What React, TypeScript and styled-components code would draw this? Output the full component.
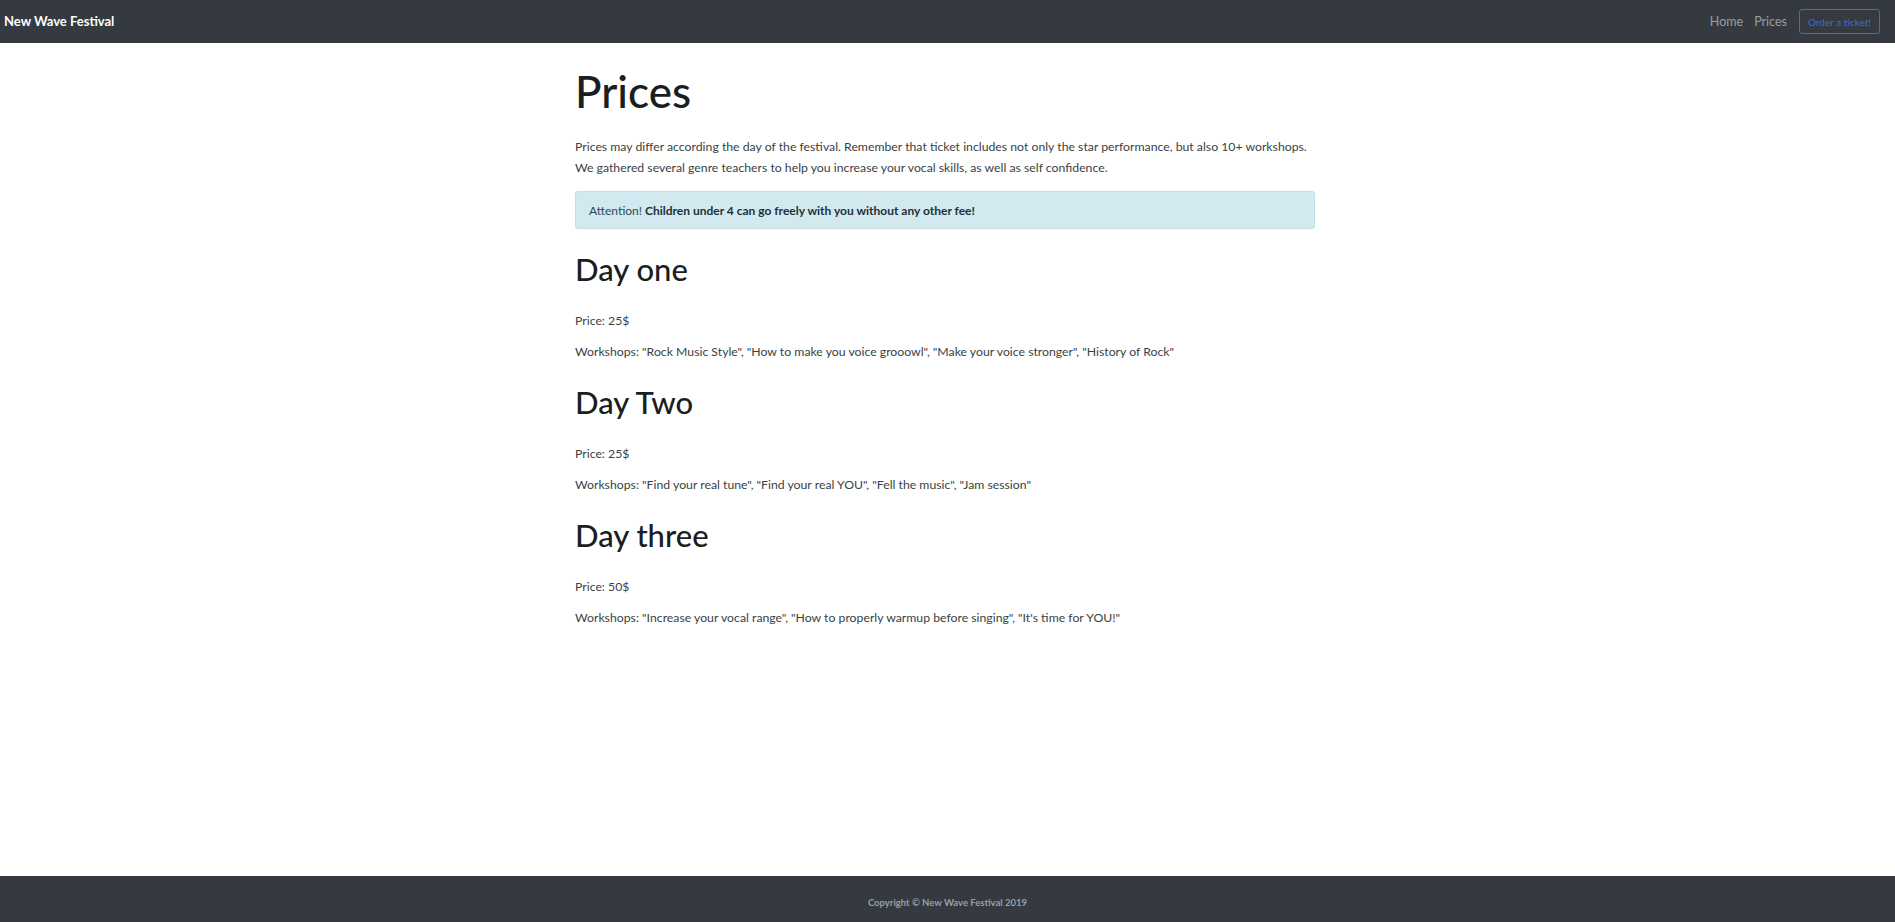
import styled, { createGlobalStyle } from "styled-components";

const GlobalStyle = createGlobalStyle`
  html, body {
    margin: 0;
    padding: 0;
  }
  body {
    font-family: Lato, "Noto Sans", sans-serif;
    color: #212529;
    background: #fff;
  }
  #root {
    min-height: 100vh;
    display: flex;
    flex-direction: column;
  }
`;

const days = [
    {
        title: "Day one",
        price: "25$",
        workshops: '"Rock Music Style", "How to make you voice grooowl", "Make your voice stronger", "History of Rock"',
    },
    {
        title: "Day Two",
        price: "25$",
        workshops: '"Find your real tune", "Find your real YOU", "Fell the music", "Jam session"',
    },
    {
        title: "Day three",
        price: "50$",
        workshops: '"Increase your vocal range", "How to properly warmup before singing", "It\'s time for YOU!"',
    },
];

const NavBar = styled.nav`
  height: 43px;
  background: #343a40;
  display: flex;
  align-items: center;
  justify-content: space-between;
  padding: 0 15px 0 4px;
  box-sizing: border-box;
`;

const Brand = styled.a`
  color: #fff;
  font-size: 13px;
  font-weight: 700;
  text-decoration: none;
  margin-top: -1px;
`;

const NavLinks = styled.div`
  display: flex;
  align-items: center;
  gap: 11px;
`;

const NavLink = styled.a`
  color: rgba(255, 255, 255, 0.5);
  font-size: 12.5px;
  text-decoration: none;
`;

const OrderButton = styled.button`
  margin-left: 1px;
  height: 25px;
  width: 81px;
  padding: 0;
  background: transparent;
  border: 1px solid #2f6fe8;
  border-radius: 3px;
  color: #2f6fe8;
  font-family: Lato, sans-serif;
  font-size: 10px;
  cursor: pointer;
`;

const Main = styled.main`
  flex: 1;
`;

const Container = styled.div`
  width: 745px;
  padding-right: 5px;
  box-sizing: border-box;
  margin: 0 auto;
`;

const Title = styled.h1`
  margin: 22px 0 18px;
  font-size: 44px;
  line-height: 53px;
  font-weight: 500;
  color: #1b1e21;
`;

const Text = styled.p<{ $gap?: number }>`
  margin: 0 0 ${(p) => p.$gap ?? 10}px;
  font-size: 12.25px;
  line-height: 21px;
  color: #3a3f44;
`;

const Alert = styled.div`
  margin: 13px 0 10px;
  height: 38px;
  box-sizing: border-box;
  display: flex;
  align-items: center;
  padding: 0 13px;
  background: #d1e9ef;
  border: 1px solid #bfe2e8;
  border-radius: 3px;
  font-size: 12px;
  color: #2f4a52;

  strong {
    margin-left: 3px;
    color: #1f3036;
  }
`;

const Section = styled.section`
  padding-top: 12px;
`;

const DayTitle = styled.h2`
  margin: 0 0 22px;
  font-size: 31px;
  line-height: 37px;
  font-weight: 500;
  color: #1b1e21;
`;

const Footer = styled.footer`
  height: 46px;
  box-sizing: border-box;
  padding-top: 7px;
  background: #343a40;
  display: flex;
  align-items: center;
  justify-content: center;
  color: #9a9ea3;
  font-size: 9.5px;
  font-weight: 700;
`;

export default function App() {
    return (
        <>
            <GlobalStyle />
            <NavBar>
                <Brand href="#">New Wave Festival</Brand>
                <NavLinks>
                    <NavLink href="#">Home</NavLink>
                    <NavLink href="#">Prices</NavLink>
                    <OrderButton>Order a ticket!</OrderButton>
                </NavLinks>
            </NavBar>
            <Main>
                <Container>
                    <Title>Prices</Title>
                    <Text $gap={0}>
                        Prices may differ according the day of the festival. Remember that ticket includes not only the star performance, but also 10+ workshops.
                        <br />
                        We gathered several genre teachers to help you increase your vocal skills, as well as self confidence.
                    </Text>
                    <Alert>
                        Attention! <strong>Children under 4 can go freely with you without any other fee!</strong>
                    </Alert>
                    {days.map((day) => (
                        <Section key={day.title}>
                            <DayTitle>{day.title}</DayTitle>
                            <Text>Price: {day.price}</Text>
                            <Text>Workshops: {day.workshops}</Text>
                        </Section>
                    ))}
                </Container>
            </Main>
            <Footer>Copyright © New Wave Festival 2019</Footer>
        </>
    );
}
